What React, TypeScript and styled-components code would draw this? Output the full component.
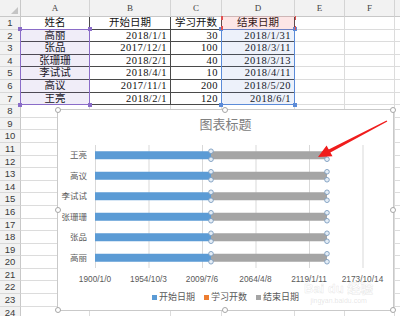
import React from "react";
import styled, { createGlobalStyle } from "styled-components";

const GlobalStyle = createGlobalStyle`
  html, body { margin: 0; padding: 0; background: #fff; }
  body {
    width: 400px;
    height: 316px;
    overflow: hidden;
    font-family: "Liberation Sans", "Noto Sans CJK SC", sans-serif;
  }
`;

const LETTERS = ["A", "B", "C", "D", "E", "F", "G"];
const ROW_COUNT = 24;

const TABLE = [
  ["姓名", "开始日期", "学习开数", "结束日期"],
  ["高丽", "2018/1/1", "30", "2018/1/31"],
  ["张品", "2017/12/1", "100", "2018/3/11"],
  ["张珊珊", "2018/2/1", "40", "2018/3/13"],
  ["李试试", "2018/4/1", "10", "2018/4/11"],
  ["高议", "2017/11/1", "200", "2018/5/20"],
  ["王亮", "2018/2/1", "120", "2018/6/1"],
];

const CATEGORIES = ["王亮", "高议", "李试试", "张珊珊", "张品", "高丽"];
const AXIS = ["1900/1/0", "1954/10/3", "2009/7/6", "2064/4/8", "2119/1/11", "2173/10/14"];

const Sheet = styled.div`
  position: relative;
  width: 400px;
  height: 316px;
  overflow: hidden;
`;

const Grid = styled.div`
  display: grid;
  grid-template-columns: 21px 69px 81px 51px 73px 50px 50px 60px;
  grid-template-rows: 17px repeat(${ROW_COUNT}, 12.6px);
`;

const RangeLayer = styled(Grid)`
  position: absolute;
  left: 0;
  top: 0;
  z-index: 1;
  pointer-events: none;
`;

const Corner = styled.div`
  box-sizing: border-box;
  background: #f2f2f2;
  border-right: 1px solid #c8c8c8;
  border-bottom: 1px solid #c8c8c8;
  display: flex;
  align-items: flex-end;
  justify-content: flex-end;
  padding: 0 2px 2px 0;
`;

const ColHead = styled.div`
  box-sizing: border-box;
  background: #f2f2f2;
  border-right: 1px solid #d4d4d4;
  border-bottom: 1px solid #c8c8c8;
  font-family: "Liberation Serif", serif;
  font-size: 9px;
  line-height: 16px;
  text-align: center;
  color: #444;
`;

const RowHead = styled.div`
  box-sizing: border-box;
  background: #f2f2f2;
  border-right: 1px solid #c8c8c8;
  border-bottom: 1px solid #d8d8d8;
  font-family: "Liberation Sans", sans-serif;
  font-size: 9.5px;
  line-height: 11.6px;
  text-align: center;
  color: #3a3a3a;
`;

const Cell = styled.div<{ $align?: "left" | "center" | "right"; $boxed?: boolean; $num?: boolean }>`
  box-sizing: border-box;
  border-right: 1px solid ${({ $boxed }) => ($boxed ? "#4a4a4a" : "#dcdcdc")};
  border-bottom: 1px solid ${({ $boxed }) => ($boxed ? "#4a4a4a" : "#dcdcdc")};
  font-family: "Liberation Serif", "Noto Sans CJK SC", serif;
  font-size: 10.5px;
  line-height: 11.6px;
  letter-spacing: ${({ $num }) => ($num ? "0.45px" : "0")};
  padding: 0 3px;
  text-align: ${({ $align }) => $align || "left"};
  white-space: nowrap;
  color: #111;
`;

const Range = styled.div<{ $col: number; $from: number; $to: number; $line: string; $fill: string }>`
  grid-column: ${({ $col }) => `${$col} / ${$col + 1}`};
  grid-row: ${({ $from, $to }) => `${$from} / ${$to}`};
  position: relative;
  margin: -1px 0 0 -1px;
  border: 1.5px solid ${({ $line }) => $line};
  background: ${({ $fill }) => $fill};
`;

const SeriesName = styled.div`
  grid-column: 5 / 6;
  grid-row: 2 / 3;
  position: relative;
  margin: -1px 0 0 -1px;
  background: rgba(240, 80, 80, 0.14);
`;

const Handle = styled.span<{ $x: "l" | "r"; $y: "t" | "b"; $color: string }>`
  position: absolute;
  width: 4px;
  height: 4px;
  background: ${({ $color }) => $color};
  ${({ $x }) => ($x === "l" ? "left: -3px;" : "right: -3px;")}
  ${({ $y }) => ($y === "t" ? "top: -3px;" : "bottom: -3px;")}
`;

const Tick = styled.span<{ $x: "l" | "r"; $y: "t" | "b" }>`
  position: absolute;
  width: 1.5px;
  height: 4px;
  background: #e05050;
  ${({ $x }) => ($x === "l" ? "left: 0;" : "right: -1px;")}
  ${({ $y }) => ($y === "t" ? "top: 0;" : "bottom: 0;")}
`;

const ChartBox = styled.div`
  position: absolute;
  left: 57px;
  top: 109px;
  width: 337px;
  height: 202px;
  box-sizing: border-box;
  background: #fff;
  border: 1px solid #c9c9c9;
  z-index: 3;
  display: flex;
  flex-direction: column;
  font-family: "Liberation Sans", "Noto Sans CJK SC", sans-serif;
  color: #595959;
`;

const ChartTitle = styled.div`
  margin-top: 7px;
  font-size: 13px;
  line-height: 16px;
  text-align: center;
  color: #808080;
`;

const PlotRow = styled.div`
  margin-top: 12px;
  display: flex;
  gap: 8px;
`;

const CatColumn = styled.div`
  width: 29px;
  display: flex;
  flex-direction: column;
`;

const CatLabel = styled.div`
  height: 20.5px;
  line-height: 20.5px;
  font-size: 8.5px;
  text-align: right;
  white-space: nowrap;
`;

const AxisRow = styled.div`
  margin: 5px 0 0 10.25px;
  display: flex;
`;

const AxisLabel = styled.div`
  width: 53.5px;
  font-size: 8.3px;
  line-height: 12px;
  text-align: center;
  white-space: nowrap;
`;

const Legend = styled.div`
  margin-top: 6px;
  display: flex;
  justify-content: center;
  gap: 9px;
`;

const LegendItem = styled.div`
  display: flex;
  align-items: center;
  gap: 2px;
  font-size: 9px;
  line-height: 12px;
`;

const Swatch = styled.span<{ $color: string }>`
  width: 5px;
  height: 5px;
  background: ${({ $color }) => $color};
`;

const ChartDot = styled.span<{ $x: number; $y: number }>`
  position: absolute;
  width: 6px;
  height: 6px;
  box-sizing: border-box;
  border-radius: 50%;
  border: 1px solid #a6a6a6;
  background: #fff;
  left: ${({ $x }) => `calc(${$x}% - 3.5px)`};
  top: ${({ $y }) => `calc(${$y}% - 3.5px)`};
`;

const ArrowLayer = styled.svg`
  position: absolute;
  left: 310px;
  top: 115px;
  z-index: 4;
`;

const Watermark = styled.div`
  position: absolute;
  left: 304px;
  top: 281px;
  z-index: 4;
  display: flex;
  flex-direction: column;
  align-items: center;
  pointer-events: none;
`;

const MarkBig = styled.div`
  font-family: "Liberation Sans", "Noto Sans CJK SC", sans-serif;
  font-size: 13px;
  font-weight: 700;
  line-height: 15px;
  color: rgba(255, 255, 255, 0.3);
  -webkit-text-stroke: 0.5px rgba(150, 150, 150, 0.25);
`;

const MarkSmall = styled.div`
  font-size: 7px;
  line-height: 9px;
  color: rgba(150, 150, 150, 0.25);
`;

const BLUE = "#5b9bd5";
const GRAY = "#a5a5a5";

function PlotArea() {
  const w = 272;
  const h = 123;
  const band = h / CATEGORIES.length;
  return (
    <svg width={w} height={h} viewBox={`0 0 ${w} ${h}`}>
      {[0, 1, 2, 3, 4, 5].map((k) => (
        <line key={k} x1={0.5 + 53.5 * k} x2={0.5 + 53.5 * k} y1={0} y2={h} stroke="#d9d9d9" strokeWidth={1} />
      ))}
      {CATEGORIES.map((c, i) => {
        const cy = band * i + band / 2;
        return (
          <g key={c}>
            <rect x={0} y={cy - 4} width={116} height={8} fill={BLUE} />
            <rect x={116} y={cy - 4} width={116} height={8} fill={GRAY} />
            {[116, 232].map((x) =>
              [cy - 4, cy + 4].map((y) => (
                <circle key={`${x}-${y}`} cx={x} cy={y} r={2.3} fill="#e4edf6" stroke="#7d9dbf" strokeWidth={0.9} />
              ))
            )}
          </g>
        );
      })}
    </svg>
  );
}

function Chart() {
  const dots = [
    [0, 0], [50, 0], [100, 0],
    [0, 50], [100, 50],
    [0, 100], [50, 100], [100, 100],
  ];
  return (
    <ChartBox>
      <ChartTitle>图表标题</ChartTitle>
      <PlotRow>
        <CatColumn>
          {CATEGORIES.map((c) => (
            <CatLabel key={c}>{c}</CatLabel>
          ))}
        </CatColumn>
        <PlotArea />
      </PlotRow>
      <AxisRow>
        {AXIS.map((a) => (
          <AxisLabel key={a}>{a}</AxisLabel>
        ))}
      </AxisRow>
      <Legend>
        <LegendItem>
          <Swatch $color={BLUE} />
          开始日期
        </LegendItem>
        <LegendItem>
          <Swatch $color="#ed7d31" />
          学习开数
        </LegendItem>
        <LegendItem>
          <Swatch $color={GRAY} />
          结束日期
        </LegendItem>
      </Legend>
      {dots.map(([x, y]) => (
        <ChartDot key={`${x}-${y}`} $x={x} $y={y} />
      ))}
    </ChartBox>
  );
}

function Arrow() {
  return (
    <ArrowLayer width={85} height={50} viewBox="0 0 85 50">
      <polygon
        points="8,42 22.5,41.2 20.4,37.4 77.3,6.6 76.6,5.4 18.7,34.4 16.6,30.6"
        fill="#f01c1c"
      />
    </ArrowLayer>
  );
}

export default function App() {
  const rows = Array.from({ length: ROW_COUNT }, (_, i) => i + 1);
  return (
    <Sheet>
      <GlobalStyle />
      <Grid>
        <Corner>
          <svg width={7} height={7} viewBox="0 0 7 7">
            <polygon points="7,0 7,7 0,7" fill="#c4c4c4" />
          </svg>
        </Corner>
        {LETTERS.map((l) => (
          <ColHead key={l}>{l}</ColHead>
        ))}
        {rows.map((r) => (
          <React.Fragment key={r}>
            <RowHead>{r}</RowHead>
            {LETTERS.map((l, ci) => {
              const data = TABLE[r - 1];
              const inTable = !!data && ci < 4;
              const text = inTable ? data[ci] : "";
              const align = r === 1 || ci === 0 ? "center" : "right";
              return (
                <Cell key={l} $boxed={inTable} $align={align} $num={r > 1 && ci > 0}>
                  {text}
                </Cell>
              );
            })}
          </React.Fragment>
        ))}
      </Grid>
      <RangeLayer>
        <Range $col={2} $from={3} $to={9} $line="#8a6cc8" $fill="rgba(112, 80, 190, 0.1)">
          <Handle $x="l" $y="t" $color="#8a6cc8" />
          <Handle $x="r" $y="t" $color="#8a6cc8" />
          <Handle $x="l" $y="b" $color="#8a6cc8" />
          <Handle $x="r" $y="b" $color="#8a6cc8" />
        </Range>
        <Range $col={5} $from={3} $to={9} $line="#5b8bd8" $fill="rgba(80, 120, 210, 0.1)">
          <Handle $x="l" $y="t" $color="#5b8bd8" />
          <Handle $x="r" $y="t" $color="#5b8bd8" />
          <Handle $x="l" $y="b" $color="#5b8bd8" />
          <Handle $x="r" $y="b" $color="#5b8bd8" />
        </Range>
        <SeriesName>
          <Tick $x="l" $y="t" />
          <Tick $x="r" $y="t" />
          <Tick $x="l" $y="b" />
          <Tick $x="r" $y="b" />
        </SeriesName>
      </RangeLayer>
      <Chart />
      <Arrow />
      <Watermark>
        <MarkBig>Bai du 经验</MarkBig>
        <MarkSmall>jingyan.baidu.com</MarkSmall>
      </Watermark>
    </Sheet>
  );
}
